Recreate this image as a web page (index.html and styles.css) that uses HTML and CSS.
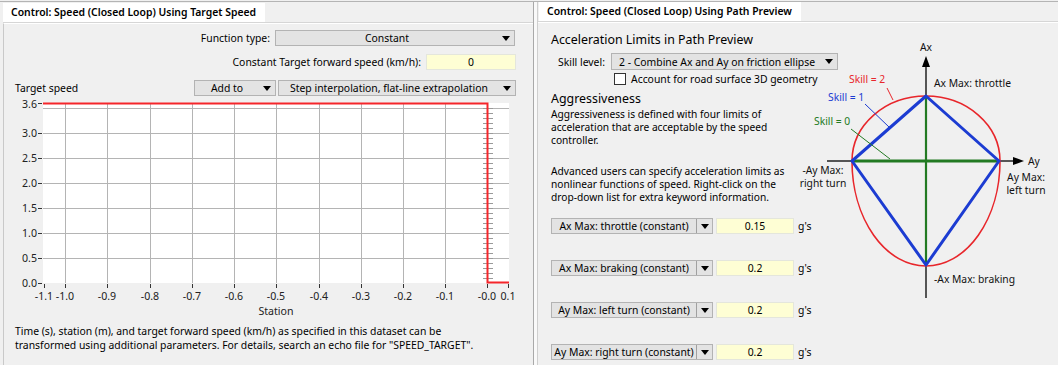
FILE: index.html
```html
<!DOCTYPE html>
<html lang="en">
  <head>
    <meta charset="UTF-8" />
    <meta name="viewport" content="width=device-width, initial-scale=1.0" />
    <title>Speed Control</title>
    <link rel="stylesheet" href="styles.css">
  </head>
  <body>
    <div class="app">
      <div class="pane pane-left">
        <div class="tabs"><div class="tab">Control: Speed (Closed Loop) Using Target Speed</div></div>
        <div class="content">
          <div class="row row-fn">
            <span class="label">Function type:</span>
            <div class="combo combo-fn"><span class="combo-text">Constant</span><span class="arrow"></span></div>
          </div>
          <div class="row row-const">
            <span class="label">Constant Target forward speed (km/h):</span>
            <div class="field field-const">0</div>
          </div>
          <div class="row row-target">
            <span class="target-label">Target speed</span>
            <div class="combo combo-add"><span class="combo-text">Add to</span><span class="arrow"></span></div>
            <div class="combo combo-interp"><span class="combo-text">Step interpolation, flat-line extrapolation</span><span class="arrow"></span></div>
          </div>

          <svg class="chart" width="529" height="221" viewBox="4 97 529 221">
            <rect x="43" y="104" width="466" height="180" fill="#fff" />
            <g stroke="#b4b4b4" stroke-width="1">
              <line x1="43" y1="109.5" x2="509" y2="109.5" />
              <line x1="43" y1="134.5" x2="509" y2="134.5" />
              <line x1="43" y1="159.5" x2="509" y2="159.5" />
              <line x1="43" y1="184.5" x2="509" y2="184.5" />
              <line x1="43" y1="209.5" x2="509" y2="209.5" />
              <line x1="43" y1="234.5" x2="509" y2="234.5" />
              <line x1="43" y1="259.5" x2="509" y2="259.5" />
              <line x1="65.5" y1="104" x2="65.5" y2="284" />
              <line x1="107.5" y1="104" x2="107.5" y2="284" />
              <line x1="150.5" y1="104" x2="150.5" y2="284" />
              <line x1="192.5" y1="104" x2="192.5" y2="284" />
              <line x1="234.5" y1="104" x2="234.5" y2="284" />
              <line x1="276.5" y1="104" x2="276.5" y2="284" />
              <line x1="319.5" y1="104" x2="319.5" y2="284" />
              <line x1="361.5" y1="104" x2="361.5" y2="284" />
              <line x1="403.5" y1="104" x2="403.5" y2="284" />
              <line x1="445.5" y1="104" x2="445.5" y2="284" />
            </g>
            <!-- minor ticks along the step -->
            <g stroke="#9a9a9a" stroke-width="1">
              <path d="M483 109.5h10M483 114.5h10M483 119.5h10M483 124.5h10M483 129.5h10M483 134.5h10M483 139.5h10M483 144.5h10M483 149.5h10M483 154.5h10M483 159.5h10M483 164.5h10M483 169.5h10M483 174.5h10M483 179.5h10M483 184.5h10M483 189.5h10M483 194.5h10M483 199.5h10M483 204.5h10M483 209.5h10M483 214.5h10M483 219.5h10M483 224.5h10M483 229.5h10M483 234.5h10M483 239.5h10M483 244.5h10M483 249.5h10M483 254.5h10M483 259.5h10M483 264.5h10M483 269.5h10M483 274.5h10M483 279.5h10" />
            </g>
            <path d="M43 104.5H487.5V283.5H509" fill="none" stroke="#f5262b" stroke-width="2" />

            <g stroke="#333" stroke-width="1">
              <path d="M38 104.5h4M38 134.5h4M38 159.5h4M38 184.5h4M38 209.5h4M38 234.5h4M38 259.5h4M38 284.5h4" />
              <path d="M44.5 285v4M65.5 285v4M107.5 285v4M150.5 285v4M192.5 285v4M234.5 285v4M276.5 285v4M319.5 285v4M361.5 285v4M403.5 285v4M445.5 285v4M487.5 285v4M508.5 285v4" />
            </g>
            <g class="axis-text" text-anchor="end">
              <text x="37" y="109">3.6</text>
              <text x="37" y="138">3.0</text>
              <text x="37" y="163">2.5</text>
              <text x="37" y="188">2.0</text>
              <text x="37" y="213">1.5</text>
              <text x="37" y="238">1.0</text>
              <text x="37" y="263">0.5</text>
              <text x="37" y="288">0.0</text>
            </g>
            <g class="axis-text" text-anchor="middle">
              <text x="44" y="301">-1.1</text>
              <text x="65" y="301">-1.0</text>
              <text x="107" y="301">-0.9</text>
              <text x="150" y="301">-0.8</text>
              <text x="192" y="301">-0.7</text>
              <text x="234" y="301">-0.6</text>
              <text x="276" y="301">-0.5</text>
              <text x="319" y="301">-0.4</text>
              <text x="361" y="301">-0.3</text>
              <text x="403" y="301">-0.2</text>
              <text x="445" y="301">-0.1</text>
              <text x="487" y="301">-0.0</text>
              <text x="508" y="301">0.1</text>
              <text x="276" y="316">Station</text>
            </g>
          </svg>

          <p class="note">Time (s), station (m), and target forward speed (km/h) as specified in this dataset can be<br>transformed using additional parameters. For details, search an echo file for "SPEED_TARGET".</p>
        </div>
      </div>

      <div class="splitter"></div>

      <div class="pane pane-right">
        <div class="tabs"><div class="tab">Control: Speed (Closed Loop) Using Path Preview</div></div>
        <div class="content content-right">
          <div class="col">
            <h2 class="heading">Acceleration Limits in Path Preview</h2>
            <div class="skill-row">
              <span class="skill-label">Skill level:</span>
              <div class="combo combo-skill"><span class="combo-text">2 - Combine Ax and Ay on friction ellipse</span><span class="arrow"></span></div>
            </div>
            <label class="check-row"><span class="checkbox"></span>Account for road surface 3D geometry</label>
            <h3 class="heading sub">Aggressiveness</h3>
            <p class="para">Aggressiveness is defined with four limits of<br>acceleration that are acceptable by the speed<br>controller.</p>
            <p class="para para-2">Advanced users can specify acceleration limits as<br>nonlinear functions of speed. Right-click on the<br>drop-down list for extra keyword information.</p>

            <div class="limit">
              <div class="combo combo-limit"><span class="combo-text">Ax Max: throttle (constant)</span><span class="arrow sep"></span></div>
              <div class="field field-limit">0.15</div>
              <span class="unit">g's</span>
            </div>
            <div class="limit">
              <div class="combo combo-limit"><span class="combo-text">Ax Max: braking (constant)</span><span class="arrow sep"></span></div>
              <div class="field field-limit">0.2</div>
              <span class="unit">g's</span>
            </div>
            <div class="limit">
              <div class="combo combo-limit"><span class="combo-text">Ay Max: left turn (constant)</span><span class="arrow sep"></span></div>
              <div class="field field-limit">0.2</div>
              <span class="unit">g's</span>
            </div>
            <div class="limit">
              <div class="combo combo-limit"><span class="combo-text">Ay Max: right turn (constant)</span><span class="arrow sep"></span></div>
              <div class="field field-limit">0.2</div>
              <span class="unit">g's</span>
            </div>
          </div>

          <svg class="diagram" width="263" height="342" viewBox="795 23 263 342">
            <!-- axes -->
            <line x1="926" y1="64" x2="926" y2="298" stroke="#222" stroke-width="1.5" />
            <polygon points="926,56 922,67 930,67" fill="#000" />
            <line x1="827" y1="161" x2="1016" y2="161" stroke="#222" stroke-width="1.5" />
            <polygon points="1024,161 1013,157 1013,165" fill="#000" />
            <!-- skill 2 -->
            <path d="M852 161A74 65 0 0 1 1000 161A74 105 0 0 1 852 161" fill="none" stroke="#e8262b" stroke-width="1.6" />
            <!-- skill 0 -->
            <line x1="852" y1="161" x2="999" y2="161" stroke="#237a23" stroke-width="3" />
            <line x1="926" y1="96" x2="926" y2="265" stroke="#237a23" stroke-width="2.2" />
            <!-- skill 1 -->
            <polygon points="926,96 999,161 926,265 852,161" fill="none" stroke="#1c3cd2" stroke-width="3" stroke-linejoin="round" />
            <!-- leaders -->
            <line x1="887" y1="88" x2="893" y2="100" stroke="#e8262b" stroke-width="1" />
            <line x1="865" y1="104" x2="889" y2="127" stroke="#1c3cd2" stroke-width="1" />
            <line x1="851" y1="129" x2="890" y2="159" stroke="#237a23" stroke-width="1" />

            <g class="diag-text">
              <text x="926" y="51" text-anchor="middle">Ax</text>
              <text x="1028" y="165">Ay</text>
              <text x="849" y="83" fill="#e8262b">Skill = 2</text>
              <text x="828" y="101" fill="#1c3cd2">Skill = 1</text>
              <text x="814" y="125" fill="#237a23">Skill = 0</text>
              <text x="934" y="87">Ax Max: throttle</text>
              <text x="823" y="174" text-anchor="middle">-Ay Max:</text>
              <text x="823" y="187" text-anchor="middle">right turn</text>
              <text x="1026" y="181" text-anchor="middle">Ay Max:</text>
              <text x="1026" y="194" text-anchor="middle">left turn</text>
              <text x="934" y="283">-Ax Max: braking</text>
            </g>
          </svg>
        </div>
      </div>
    </div>
  </body>
</html>
```

FILE: styles.css
```css
* {
  box-sizing: border-box;
  margin: 0;
  padding: 0;
}

body {
  background-color: #f0f0f0;
  font-family: "Noto Sans", "Open Sans", sans-serif;
  font-size: 10.4px;
  color: #000;
  padding-top: 1px;
  overflow: hidden;
}

.app {
  display: flex;
  height: 364px;
  border-top: 1px solid #b4b4b4;
}

.pane {
  display: flex;
  flex-direction: column;
}

.pane-left {
  width: 534px;
  padding-left: 3px;
  border-right: 1px solid #a9a9a9;
}

.splitter {
  width: 3px;
  background-color: #f9f9f9;
}

.pane-right {
  flex: 1;
  border-left: 1px solid #cfcfcf;
}

.tabs {
  height: 21px;
  display: flex;
  align-items: flex-end;
  border-bottom: 1px solid #d6d6d6;
}

.tab {
  height: 19px;
  line-height: 19px;
  background-color: #fff;
  padding: 0 9px 0 8px;
  font-weight: 600;
  font-size: 10.4px;
  white-space: nowrap;
}

.pane-right .tab {
  margin-left: 1px;
}

.content {
  flex: 1;
  border-top: 1px solid #fff;
  border-left: 1px solid #c9c9c9;
}

.row {
  display: flex;
  align-items: center;
  height: 16px;
}

.row-fn {
  margin-top: 6px;
  justify-content: flex-end;
  padding-right: 18px;
}

.row-const {
  margin-top: 8px;
  justify-content: flex-end;
  padding-right: 17px;
}

.row-target {
  margin-top: 10px;
  padding-left: 11px;
  padding-right: 17px;
}

.label {
  margin-right: 5px;
  white-space: nowrap;
}

.target-label {
  flex: 1;
}

.combo {
  display: flex;
  align-items: center;
  height: 16px;
  background-color: #e3e3e3;
  border: 1px solid #b3b3b3;
  white-space: nowrap;
}

.combo-text {
  flex: 1;
  text-align: center;
  overflow: hidden;
}

.arrow {
  width: 16px;
  height: 100%;
  display: flex;
  align-items: center;
  justify-content: center;
  flex-shrink: 0;
}

.arrow::after {
  content: "";
  border-left: 4px solid transparent;
  border-right: 4px solid transparent;
  border-top: 5px solid #000;
}

.arrow.sep {
  border-left: 1px solid #a0a0a0;
}

.combo-fn {
  width: 240px;
}

.combo-add {
  width: 82px;
  margin-right: 2px;
}

.combo-interp {
  width: 238px;
}

.field {
  height: 16px;
  line-height: 14px;
  background-color: #fefed4;
  border: 1px solid #e4e6dc;
  text-align: center;
}

.field-const {
  width: 90px;
}

.chart {
  display: block;
}

.axis-text text {
  font-family: "Noto Sans", "Open Sans", sans-serif;
  font-size: 10.6px;
}

.axis-text {
  fill: #222;
}

.note {
  margin-top: 7px;
  padding-left: 11px;
  line-height: 14px;
  white-space: nowrap;
}

/* right side */

.content-right {
  display: flex;
  border-left: none;
  padding-left: 13px;
}

.col {
  width: 244px;
  flex-shrink: 0;
}

.heading {
  font-size: 12.4px;
  font-weight: normal;
  line-height: 16px;
  margin-top: 9px;
  white-space: nowrap;
}

.heading.sub {
  margin-top: 6px;
}

.skill-row {
  display: flex;
  align-items: center;
  margin-top: 5px;
  padding-left: 7px;
  white-space: nowrap;
}

.skill-label {
  width: 53px;
  flex-shrink: 0;
}

.combo-skill {
  width: 227px;
  height: 17px;
  flex-shrink: 0;
}

.combo-skill .combo-text {
  text-align: left;
  padding-left: 7px;
}

.check-row {
  display: flex;
  align-items: center;
  height: 13px;
  margin-top: 2px;
  padding-left: 63px;
  white-space: nowrap;
}

.checkbox {
  width: 12px;
  height: 12px;
  flex-shrink: 0;
  background-color: #fff;
  border: 1px solid #333;
  margin-right: 5px;
}

.para {
  font-size: 10.2px;
  line-height: 13px;
  margin-top: 1px;
  white-space: nowrap;
}

.para-2 {
  margin-top: 18px;
}

.limit {
  display: flex;
  align-items: center;
  margin-top: 26px;
  white-space: nowrap;
}

.para-2 + .limit {
  margin-top: 14px;
}

.combo-limit {
  width: 162px;
  flex-shrink: 0;
}

.field-limit {
  width: 78px;
  margin-left: 3px;
  flex-shrink: 0;
}

.unit {
  margin-left: 4px;
}

.diagram {
  display: block;
  flex-shrink: 0;
  overflow: visible;
}

.diag-text {
  fill: #111;
}

.diag-text text {
  font-family: "Noto Sans", "Open Sans", sans-serif;
  font-size: 10.3px;
}
```
